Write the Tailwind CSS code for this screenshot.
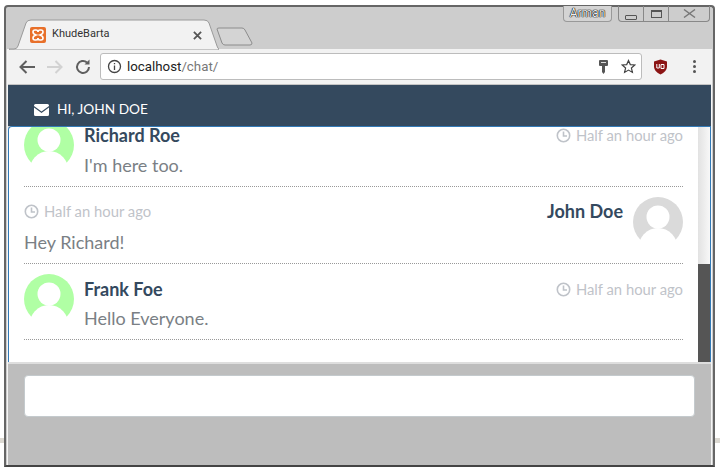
<!DOCTYPE html>
<html lang="en">
<head>
    <meta charset="UTF-8">
    <title>KhudeBarta</title>
    <script src="https://cdn.jsdelivr.net/npm/@tailwindcss/browser@4"></script>
</head>
<body class="bg-white h-[474px] w-[720px] overflow-hidden relative font-['Lato',sans-serif]">
    <!-- desktop line behind the window -->
    <div class="absolute left-0 right-0 top-[438px] h-[5px] bg-[#dcd9d2]"></div>

    <!-- browser window -->
    <div class="absolute left-[4px] top-[5px] w-[711px] h-[462px] bg-[#cdcdcd] border-2 border-[#666] border-b-[#444] rounded-t-[4px] flex flex-col">
        <div class="h-[42px] relative shrink-0">
            <!-- tab -->
            <svg class="absolute left-[3px] top-[12px]" width="210" height="31" viewBox="0 0 210 31">
                <path d="M0 30H5Q8 30 9 27L17 4Q18 1 22 1H195Q199 1 200 4L208 27Q209 30 210 30V31H0Z" fill="#f2f2f2" stroke="#9a9a9a"/>
            </svg>
            <svg class="absolute left-[210px] top-[20px]" width="38" height="20" viewBox="0 0 38 20">
                <path d="M1 2Q1 1 3 1H26Q28 1 29 3L36 16Q36 18 34 18H9Q7 18 6 16Z" fill="#d4d4d4" stroke="#8c8c8c"/>
            </svg>
            <div class="absolute left-[24px] top-[20px] w-[16px] h-[16px] rounded-[2px] bg-[#e8702a] flex items-center justify-center">
                <svg width="12" height="12" viewBox="0 0 12 12" fill="none" stroke="#fff" stroke-width="1.6"><path d="M1 3Q1 1 3 1H4Q6 1 6 3Q6 1 8 1H9Q11 1 11 3Q11 5 8 6Q11 7 11 9Q11 11 9 11H8Q6 11 6 9Q6 11 4 11H3Q1 11 1 9Q1 7 4 6Q1 5 1 3Z"/></svg>
            </div>
            <span class="absolute left-[46px] top-[20px] text-[11px] leading-[14px] text-[#333] font-['Roboto',sans-serif]">KhudeBarta</span>
            <svg class="absolute left-[187px] top-[24px]" width="9" height="9" viewBox="0 0 10 10" stroke="#555" stroke-width="2"><path d="M1 1L9 9M9 1L1 9"/></svg>
            <!-- profile chip and window buttons -->
            <div class="absolute left-[557px] top-[-1px] w-[49px] h-[16px] border border-t-0 border-[#999] rounded-b-[4px] bg-[#d4d4d4] text-[12px] leading-[15px] text-center text-[#eee] [text-shadow:0_0_1px_#000,0_0_1px_#000,0_0_1px_#000] font-['Roboto',sans-serif]">Arman</div>
            <div class="absolute left-[612px] top-[-1px] w-[92px] h-[16px] border border-t-0 border-[#888] rounded-b-[4px] flex">
                <div class="w-[25px] border-r border-[#888] flex items-end justify-center pb-[1px]"><div class="w-[12px] h-[5px] border border-[#555] rounded-[1px]"></div></div>
                <div class="w-[25px] border-r border-[#888] flex items-center justify-center"><div class="w-[11px] h-[8px] border border-[#555] border-t-2"></div></div>
                <div class="flex-1 flex items-center justify-center">
                    <svg width="13" height="9" viewBox="0 0 13 9" stroke="#777" stroke-width="1.4"><path d="M1 .5L12 8.500M12 .5L1 8.500"/></svg>
                </div>
            </div>
        </div>

        <div class="mx-[1px] flex-1 flex flex-col min-h-0 border-x border-[#f5f5f5]">
            <!-- toolbar -->
            <div class="h-[36px] bg-[#f2f2f2] border-b border-[#c4c4c4] shrink-0 flex items-center pl-[10px] pr-[11px]">
                <svg width="18" height="16" viewBox="0 0 18 16" fill="none" stroke="#5f5f5f" stroke-width="2"><path d="M17 8H3M8.500 2L2.500 8L8.500 14"/></svg>
                <svg class="ml-[10px]" width="18" height="16" viewBox="0 0 18 16" fill="none" stroke="#d2d2d2" stroke-width="2"><path d="M1 8H15M9.500 2L15.500 8L9.500 14"/></svg>
                <svg class="ml-[10px]" width="18" height="18" viewBox="0 0 18 18" fill="none" stroke="#5f5f5f" stroke-width="2"><path d="M15 9A6 6 0 1 1 13 4.500"/><path d="M15.500 1.500V6.500H10.500" fill="#5f5f5f" stroke="none"/></svg>
                <div class="ml-[8px] w-[542px] h-[27px] bg-white border border-[#bcbcbc] rounded-[3px] flex items-center pl-[6px] pr-[5px]">
                    <svg width="15" height="15" viewBox="0 0 15 15" fill="none" stroke="#444" stroke-width="1.300"><circle cx="7.500" cy="7.500" r="6"/><path d="M7.500 6.500V11M7.500 4V5.300"/></svg>
                    <span class="ml-[5px] text-[13.3px] text-[#222] font-['Roboto',sans-serif]">localhost<span class="text-[#777]">/chat/</span></span>
                    <div class="ml-auto flex items-center gap-[13px]">
                        <svg width="9" height="14" viewBox="0 0 9 14" fill="#555"><path d="M1 0H8Q9 0 9 1V5Q9 6 8 6H6V12L4.500 14L3 12V6H1Q0 6 0 5V1Q0 0 1 0Z"/><path d="M2 2H7V3H2Z" fill="#ddd"/></svg>
                        <svg width="15" height="15" viewBox="0 0 15 15" fill="none" stroke="#444" stroke-width="1.200"><path d="M7.500 1.500L9.300 5.600L13.800 6L10.400 9L11.400 13.400L7.500 11.100L3.600 13.400L4.600 9L1.200 6L5.700 5.600Z"/></svg>
                    </div>
                </div>
                <svg class="ml-[11px]" width="15" height="16" viewBox="0 0 15 16"><path d="M7.500 .5L14 2.500V8Q13.500 13 7.500 15.500Q1.500 13 1 8V2.500Z" fill="#8b1414"/><path d="M3.800 5V9H6.300V5M8 9.500V5.500H11V9.500Z" fill="none" stroke="#fff" stroke-width="1"/></svg>
                <div class="ml-[25px] flex flex-col gap-[2px]">
                    <div class="w-[3px] h-[3px] bg-[#555] rounded-full"></div>
                    <div class="w-[3px] h-[3px] bg-[#555] rounded-full"></div>
                    <div class="w-[3px] h-[3px] bg-[#555] rounded-full"></div>
                </div>
            </div>

            <!-- navbar -->
            <div class="h-[41px] bg-[#34495e] shrink-0 flex items-center pl-[26px] pt-[8px] text-white text-[13.7px]">
                <svg width="15" height="12" viewBox="0 0 15 12" fill="#fff"><path d="M0 1.500Q0 0 1.500 0H13.500Q15 0 15 1.500V2L7.500 7.500L0 2ZM0 3.500L7.500 9L15 3.500V10.500Q15 12 13.500 12H1.500Q0 12 0 10.500Z"/></svg>
                <span class="ml-[8px]">HI, JOHN DOE</span>
            </div>

            <!-- chat panel -->
            <div class="h-[236px] shrink-0 flex bg-white border-t border-x border-[#337ab7] rounded-tl-[4px] overflow-hidden">
                <div class="flex-1 min-w-0 overflow-hidden px-[15px]">
                    <div class="-mt-[7px] mb-[10px] border-b border-dotted border-[#999] h-[67px] flex">
                        <svg class="shrink-0" width="50" height="50" viewBox="0 0 50 50"><circle cx="25" cy="25" r="25" fill="#b0ffa4"/><circle cx="25" cy="20" r="11.500" fill="#fff"/><ellipse cx="25" cy="52" rx="20" ry="21" fill="#fff"/></svg>
                        <div class="ml-[10px] flex-1 min-w-0">
                            <div class="flex justify-between items-center h-[19px] mt-[6px]">
                                <span class="text-[18px] font-bold text-[#34495e]">Richard Roe</span>
                                <span class="text-[14.8px] text-[#bfc3c9] flex items-center gap-[5px]"><svg width="15" height="15" viewBox="0 0 15 15" fill="none" stroke="#bfc3c9" stroke-width="1.600"><circle cx="7.500" cy="7.500" r="6.200"/><path d="M7.500 3.500V8H11"/></svg>Half an hour ago</span>
                            </div>
                            <p class="mt-[10px] text-[18px] leading-[21px] text-[#7a7f85]">I'm here too.</p>
                        </div>
                    </div>

                    <div class="mb-[10px] border-b border-dotted border-[#999] h-[67px] flex">
                        <div class="flex-1 min-w-0">
                            <div class="flex justify-between items-center h-[19px] mt-[5px]">
                                <span class="text-[14.8px] text-[#bfc3c9] flex items-center gap-[5px]"><svg width="15" height="15" viewBox="0 0 15 15" fill="none" stroke="#bfc3c9" stroke-width="1.600"><circle cx="7.500" cy="7.500" r="6.200"/><path d="M7.500 3.500V8H11"/></svg>Half an hour ago</span>
                                <span class="text-[18px] font-bold text-[#34495e]">John Doe</span>
                            </div>
                            <p class="mt-[10px] text-[18px] leading-[22px] text-[#7a7f85]">Hey Richard!</p>
                        </div>
                        <svg class="shrink-0 ml-[10px]" width="50" height="50" viewBox="0 0 50 50"><circle cx="25" cy="25" r="25" fill="#dadada"/><circle cx="25" cy="20" r="11.500" fill="#fff"/><ellipse cx="25" cy="52" rx="20" ry="21" fill="#fff"/></svg>
                    </div>

                    <div class="border-b border-dotted border-[#999] h-[66px] flex">
                        <svg class="shrink-0" width="50" height="50" viewBox="0 0 50 50"><circle cx="25" cy="25" r="25" fill="#b0ffa4"/><circle cx="25" cy="20" r="11.500" fill="#fff"/><ellipse cx="25" cy="52" rx="20" ry="21" fill="#fff"/></svg>
                        <div class="ml-[10px] flex-1 min-w-0">
                            <div class="flex justify-between items-center h-[19px] mt-[6px]">
                                <span class="text-[18px] font-bold text-[#34495e]">Frank Foe</span>
                                <span class="text-[14.8px] text-[#bfc3c9] flex items-center gap-[5px]"><svg width="15" height="15" viewBox="0 0 15 15" fill="none" stroke="#bfc3c9" stroke-width="1.600"><circle cx="7.500" cy="7.500" r="6.200"/><path d="M7.500 3.500V8H11"/></svg>Half an hour ago</span>
                            </div>
                            <p class="mt-[8px] text-[18px] leading-[22px] text-[#7a7f85]">Hello Everyone.</p>
                        </div>
                    </div>
                </div>
                <div class="w-[12px] shrink-0 flex flex-col bg-gradient-to-r from-[#e2e2e2] to-[#f8f8f8]">
                    <div class="flex-1"></div>
                    <div class="h-[98px] bg-[#555]"></div>
                </div>
            </div>

            <!-- footer -->
            <div class="flex-1 bg-[#bdbdbd] border-t-2 border-[#dedede] pl-[16px] pr-[16px] pt-[11px]">
                <div class="h-[42px] bg-white rounded-[4px] border border-[#c4cacd]"></div>
            </div>
        </div>
    </div>
</body>
</html>
